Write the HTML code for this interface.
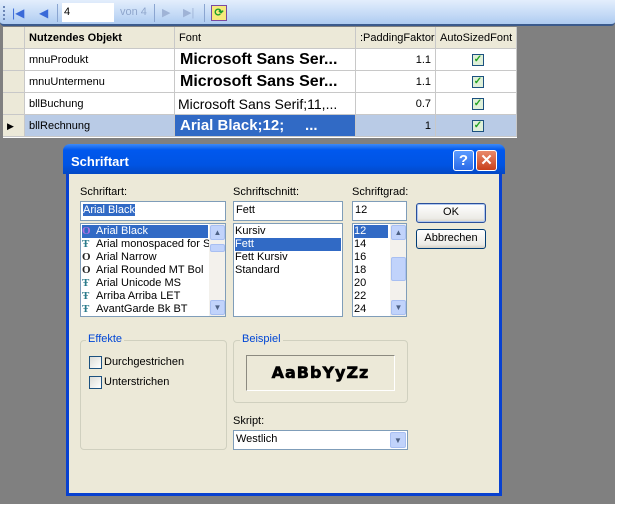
<!DOCTYPE html><html><head><style>
*{box-sizing:border-box;margin:0;padding:0}
body{width:617px;height:506px;background:#fff;font-family:"Liberation Sans",Arial,sans-serif;font-size:11px;position:relative;overflow:hidden}
.a{position:absolute}
#bg{left:0;top:0;width:615px;height:504px;background:#808080}
#tb{left:0;top:0;width:615px;height:26px;background:linear-gradient(#e3eefc,#c4daf6 60%,#aecbf0);border-bottom:2px solid #3b5a8c;border-radius:0 0 4px 4px}
.grid{left:3px;top:27px;width:514px;height:111px;background:#fff}
.c{position:absolute;border-right:1px solid #c8c8c8;border-bottom:1px solid #c8c8c8;white-space:nowrap;overflow:hidden;line-height:22px;padding-left:4px}
.h{background:#ece9d8;color:#000}
.chk{display:inline-block;width:12px;height:12px;border:1px solid #1c5180;background:#dff0d8;color:#21a121;font-size:10px;line-height:10px;text-align:center;font-weight:bold;vertical-align:middle}
#dlg{left:66px;top:147px;width:436px;height:349px;background:#ece9d8;border:3px solid #0841d0;border-top:none;border-radius:7px 7px 0 0}
#tt{left:63px;top:144px;width:442px;height:30px;background:linear-gradient(#3d8af7,#0058ee 20%,#0054e3 70%,#0348c4);border-radius:7px 7px 0 0;color:#fff;font-weight:bold;font-size:13px;padding:10px 0 0 8px}
.inp{background:#fff;border:1px solid #7f9db9;padding:2px 2px;font-size:11px}
.lst{background:#fff;border:1px solid #7f9db9;font-size:11px;line-height:13px;overflow:hidden}
.sel{background:#316ac5;color:#fff}
.btn{border:1px solid #003c74;border-radius:3px;background:linear-gradient(#fff,#ecebe6 80%,#d6d0c5);text-align:center;font-size:11px;line-height:17px}
.sb{position:absolute;right:0;top:0;width:16px;height:100%;background:#f3f1ec}
.sbb{position:absolute;left:1px;width:15px;height:15px;background:#c1d3fb;border:1px solid #a8bff2;border-radius:2px;color:#4d6185;font-size:8px;text-align:center;line-height:13px}
.grp{border:1px solid #d0d0bf;border-radius:4px}
.gl{position:absolute;background:#ece9d8;color:#0046d5;padding:0 2px;font-size:11px}
.cb{position:absolute;width:13px;height:13px;border:1px solid #1c5180;background:linear-gradient(135deg,#dcdcd7,#fff)}
.ic{display:inline-block;width:14px;font-family:"Liberation Serif",serif;font-weight:bold;color:#6b3b8a}
</style></head><body>
<div class="a" id="bg"></div>
<div class="a" id="tb">
<div class="a" style="left:3px;top:6px;width:2px;height:14px;border-left:2px dotted #6b86b6"></div>
<div class="a" style="left:12px;top:6px;color:#3a6ad8;font-size:12px">|◀</div>
<div class="a" style="left:39px;top:6px;color:#3a6ad8;font-size:12px">◀</div>
<div class="a" style="left:57px;top:4px;width:1px;height:18px;background:#8aa5d1"></div>
<div class="a" style="left:62px;top:3px;width:52px;height:19px;background:#fff;padding:3px 2px;font-size:11px">4</div>
<div class="a" style="left:120px;top:6px;color:#8fa6cc">von 4</div>
<div class="a" style="left:154px;top:4px;width:1px;height:18px;background:#8aa5d1"></div>
<div class="a" style="left:162px;top:6px;color:#9fb3d6;font-size:11px">▶</div>
<div class="a" style="left:183px;top:6px;color:#9fb3d6;font-size:11px">▶|</div>
<div class="a" style="left:204px;top:4px;width:1px;height:18px;background:#8aa5d1"></div>
<div class="a" style="left:211px;top:5px;width:16px;height:16px;background:#f6e97c;border:1px solid #7a4aa0;color:#1f9d2b;font-size:11px;text-align:center;line-height:14px;font-weight:bold">⟳</div>
</div>
<div class="a grid">
<div class="c h" style="left:0;top:0;width:22px;height:22px"></div>
<div class="c h" style="left:22px;top:0;width:150px;height:22px;font-weight:bold">Nutzendes Objekt</div>
<div class="c h" style="left:172px;top:0;width:181px;height:22px">Font</div>
<div class="c h" style="left:353px;top:0;width:80px;height:22px">:PaddingFaktor</div>
<div class="c h" style="left:433px;top:0;width:81px;height:22px">AutoSizedFont</div>

<div class="c h" style="left:0;top:22px;width:22px;height:22px"></div>
<div class="c" style="left:22px;top:22px;width:150px;height:22px">mnuProdukt</div>
<div class="c" style="left:172px;top:22px;width:181px;height:22px;font-size:16px;font-weight:bold;padding-left:5px">Microsoft Sans Ser...</div>
<div class="c" style="left:353px;top:22px;width:80px;height:22px;text-align:right;padding-right:4px">1.1</div>
<div class="c" style="left:433px;top:22px;width:81px;height:22px;text-align:center"><span class="chk">✓</span></div>

<div class="c h" style="left:0;top:44px;width:22px;height:22px"></div>
<div class="c" style="left:22px;top:44px;width:150px;height:22px">mnuUntermenu</div>
<div class="c" style="left:172px;top:44px;width:181px;height:22px;font-size:16px;font-weight:bold;padding-left:5px">Microsoft Sans Ser...</div>
<div class="c" style="left:353px;top:44px;width:80px;height:22px;text-align:right;padding-right:4px">1.1</div>
<div class="c" style="left:433px;top:44px;width:81px;height:22px;text-align:center"><span class="chk">✓</span></div>

<div class="c h" style="left:0;top:66px;width:22px;height:22px"></div>
<div class="c" style="left:22px;top:66px;width:150px;height:22px">bllBuchung</div>
<div class="c" style="left:172px;top:66px;width:181px;height:22px;font-size:14px;padding-left:3px">Microsoft Sans Serif;11,...</div>
<div class="c" style="left:353px;top:66px;width:80px;height:22px;text-align:right;padding-right:4px">0.7</div>
<div class="c" style="left:433px;top:66px;width:81px;height:22px;text-align:center"><span class="chk">✓</span></div>

<div class="c h" style="left:0;top:88px;width:22px;height:22px;font-size:9px">▶</div>
<div class="c" style="left:22px;top:88px;width:150px;height:22px;background:#b9cbe6">bllRechnung</div>
<div class="c" style="left:172px;top:88px;width:181px;height:22px;background:#316ac5;color:#fff;font-size:15px;font-weight:bold;padding-left:5px">Arial Black;12;&nbsp;&nbsp;&nbsp;&nbsp;&nbsp;...</div>
<div class="c" style="left:353px;top:88px;width:80px;height:22px;background:#b9cbe6;text-align:right;padding-right:4px">1</div>
<div class="c" style="left:433px;top:88px;width:81px;height:22px;background:#b9cbe6;text-align:center"><span class="chk">✓</span></div>
</div>

<div class="a" id="dlg"></div>
<div class="a" id="tt">Schriftart</div>
<div class="a" style="left:453px;top:150px;width:21px;height:21px;border:1px solid #fff;border-radius:3px;background:linear-gradient(#5a9bff,#2a6ae8);color:#fff;font-weight:bold;font-size:15px;text-align:center;line-height:19px">?</div>
<div class="a" style="left:476px;top:150px;width:21px;height:21px;border:1px solid #fff;border-radius:3px;background:linear-gradient(#e98a6a,#c8401c);color:#fff;font-weight:bold;font-size:15px;text-align:center;line-height:19px">✕</div>

<div class="a" style="left:80px;top:186px">Schriftart:</div>
<div class="a inp" style="left:80px;top:201px;width:146px;height:20px"><span class="sel">Arial Black</span></div>
<div class="a lst" style="left:80px;top:223px;width:146px;height:94px;padding:1px">
<div><span class="sel" style="display:block;width:126px"><span class="ic" style="color:#b070e0">O</span>Arial Black</span></div>
<div><span class="ic" style="color:#2a7a8a">Ŧ</span>Arial monospaced for S</div>
<div><span class="ic" style="color:#222">O</span>Arial Narrow</div>
<div><span class="ic" style="color:#222">O</span>Arial Rounded MT Bol</div>
<div><span class="ic" style="color:#2a7a8a">Ŧ</span>Arial Unicode MS</div>
<div><span class="ic" style="color:#2a7a8a">Ŧ</span>Arriba Arriba LET</div>
<div><span class="ic" style="color:#2a7a8a">Ŧ</span>AvantGarde Bk BT</div>
<div class="sb"><div class="sbb" style="top:1px">▲</div><div class="sbb" style="top:20px;height:8px"></div><div class="sbb" style="bottom:1px">▼</div></div>
</div>

<div class="a" style="left:233px;top:186px">Schriftschnitt:</div>
<div class="a inp" style="left:233px;top:201px;width:110px;height:20px">Fett</div>
<div class="a lst" style="left:233px;top:223px;width:110px;height:94px;padding:1px">
<div>Kursiv</div><div class="sel">Fett</div><div>Fett Kursiv</div><div>Standard</div></div>

<div class="a" style="left:352px;top:186px">Schriftgrad:</div>
<div class="a inp" style="left:352px;top:201px;width:55px;height:20px">12</div>
<div class="a lst" style="left:352px;top:223px;width:55px;height:94px;padding:1px">
<div><span class="sel" style="display:block;width:34px">12</span></div><div>14</div><div>16</div><div>18</div><div>20</div><div>22</div><div>24</div>
<div class="sb"><div class="sbb" style="top:1px">▲</div><div class="sbb" style="top:33px;height:24px"></div><div class="sbb" style="bottom:1px">▼</div></div>
</div>

<div class="a btn" style="left:416px;top:203px;width:70px;height:20px;border-color:#2a4f9a;box-shadow:inset 0 0 0 1px #b0c8f0">OK</div>
<div class="a btn" style="left:416px;top:229px;width:70px;height:20px">Abbrechen</div>

<div class="a grp" style="left:80px;top:340px;width:147px;height:110px"></div>
<div class="a gl" style="left:86px;top:333px">Effekte</div>
<div class="cb" style="left:89px;top:356px"></div><div class="a" style="left:104px;top:356px">Durchgestrichen</div>
<div class="cb" style="left:89px;top:376px"></div><div class="a" style="left:104px;top:376px">Unterstrichen</div>

<div class="a grp" style="left:233px;top:340px;width:175px;height:63px"></div>
<div class="a gl" style="left:240px;top:333px">Beispiel</div>
<div class="a" style="left:246px;top:355px;width:149px;height:36px;border:1px solid;border-color:#8c8a80 #fff #fff #8c8a80;text-align:center;font-family:'DejaVu Sans',sans-serif;font-weight:900;font-size:16px;line-height:34px;letter-spacing:1px;-webkit-text-stroke:0.6px #000">AaBbYyZz</div>

<div class="a" style="left:233px;top:415px">Skript:</div>
<div class="a inp" style="left:233px;top:430px;width:175px;height:20px">Westlich
<div class="sbb" style="left:auto;right:1px;top:1px;height:16px;width:16px;line-height:15px">▼</div></div>
</body></html>
